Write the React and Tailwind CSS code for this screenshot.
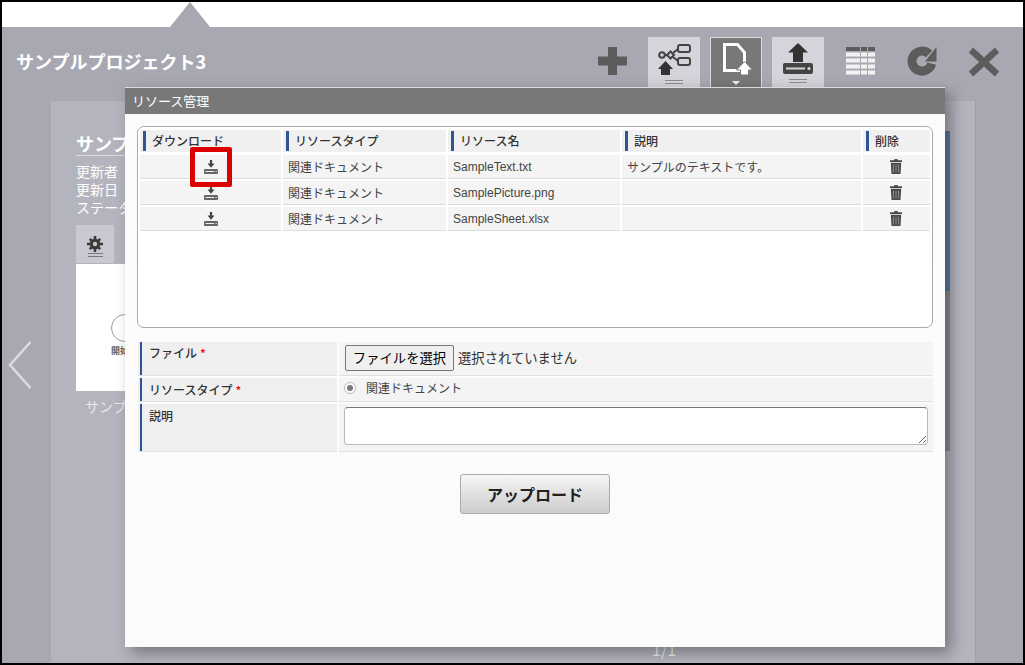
function DownloadIcon() {
  return (
    <svg viewBox="0 0 14 14" className="w-[14px] h-[14px]">
      <path d="M5.900 0h2.200v3.600h2.400L7 7.800 3.500 3.600h2.400z" fill="#444" />
      <path d="M1 9h12a1 1 0 0 1 1 1v3a1 1 0 0 1-1 1H1a1 1 0 0 1-1-1v-3a1 1 0 0 1 1-1z" fill="#666" />
      <path d="M1.500 11h8.500v1H1.500zM11.500 11h1.200v1h-1.200z" fill="#f0f0f0" />
    </svg>
  );
}

function TrashIcon() {
  return (
    <svg viewBox="0 0 12 15" className="w-[12px] h-[15px]">
      <path d="M4 1.200 4.700 0h2.600l.7 1.200H12V3H0V1.200z" fill="#4a4a4a" />
      <path d="M.8 3.800h10.400l-.7 11.200h-9z" fill="#4a4a4a" />
      <path d="M3 5.500h1v8H3zM5.500 5.500h1v8h-1zM8 5.500h1v8H8z" fill="#8c8c8c" />
    </svg>
  );
}

function GearIcon() {
  return (
    <svg viewBox="0 0 16 16" className="w-4 h-4">
      <g fill="#3a3a3a">
        <circle cx="8" cy="8" r="5.200" />
        <path d="M6.700 0h2.600v16H6.700zM0 6.700h16v2.600H0z" />
        <path d="M1.900 3.700 3.700 1.900l10.400 10.400-1.800 1.800zM12.300 1.900l1.800 1.800L3.700 14.100l-1.800-1.800z" />
      </g>
      <circle cx="8" cy="8" r="2.200" fill="#c8c8d0" />
    </svg>
  );
}

function TabLines() {
  return (
    <div className="flex flex-col gap-[2px] mt-[5px]">
      <div className="w-[18px] h-px bg-[#8c8c8c]" />
      <div className="w-[18px] h-px bg-[#8c8c8c]" />
    </div>
  );
}

function Toolbar() {
  return (
    <div className="flex items-start pt-[10px]">
      <svg viewBox="0 0 29 28" className="w-[29px] h-[28px] mt-[10px] mr-[21px]">
        <path d="M10 0h9v9.500h10v9H19V28h-9v-9.500H0v-9h10z" fill="#5c5c5c" />
      </svg>

      <div className="w-[52px] h-[50px] bg-[#d4d4da] flex flex-col items-center pt-[7px] mr-[10px]">
        <svg viewBox="0 0 33 31" className="w-[33px] h-[31px]">
          <g fill="none" stroke="#444" strokeWidth="2">
            <circle cx="4" cy="11" r="2.800" />
            <path d="M12.500 7.500 16 11l-3.500 3.500L9 11z" />
            <path d="M7 11h2M15 9l5-4M15 13l5 4" />
            <rect x="20" y="1" width="12" height="7" rx="2" />
            <rect x="20" y="14" width="12" height="7" rx="2" />
          </g>
          <path d="M7.500 17l7.500 8h-3v6H3v-6H0z" fill="#333" />
        </svg>
        <TabLines />
      </div>

      <div className="w-[52px] h-[51px] bg-[#787878] border border-[#dcdcdc] border-b-0 flex flex-col pt-[5px] mr-[10px]">
        <svg viewBox="0 0 30 32" className="w-[30px] h-[32px] ml-[12px]">
          <path d="M1.500 1.500h13l7 8v18h-20z" fill="none" stroke="#fff" strokeWidth="3" />
          <path d="M21.500 18.500l8 8.500h-4v5h-8v-5h-4z" fill="#fff" stroke="#787878" strokeWidth="1" />
        </svg>
        <div className="self-center mt-[6px] w-0 h-0 border-l-[4px] border-r-[4px] border-t-[4px] border-l-transparent border-r-transparent border-t-[#eee]" />
      </div>

      <div className="w-[52px] h-[50px] bg-[#d4d4da] flex flex-col items-center pt-[6px] mr-[22px]">
        <svg viewBox="0 0 30 31" className="w-[30px] h-[31px]">
          <path d="M15 0l10 9.500h-5V19H10V9.500H5z" fill="#333" />
          <path d="M2 20h26a2 2 0 0 1 2 2v7a2 2 0 0 1-2 2H2a2 2 0 0 1-2-2v-7a2 2 0 0 1 2-2z" fill="#444" />
          <path d="M3 24.500h19v2H3z" fill="#d4d4da" />
          <circle cx="26" cy="25.500" r="1.600" fill="#d4d4da" />
        </svg>
        <TabLines />
      </div>

      <svg viewBox="0 0 29 28" className="w-[29px] h-[28px] mt-[10px] mr-[32px]">
        <path d="M0 0h14v4H0zM15 0h6v4h-6zM22 0h7v4h-7z" fill="#5c5c5c" />
        <path d="M0 5.500h14v4H0zM15 5.500h6v4h-6zM22 5.500h7v4h-7zM0 11.500h14v4H0zM15 11.500h6v4h-6zM22 11.500h7v4h-7zM0 17.500h14v4H0zM15 17.500h6v4h-6zM22 17.500h7v4h-7zM0 23.500h14v4H0zM15 23.500h6v4h-6zM22 23.500h7v4h-7z" fill="#f2f2f2" />
      </svg>

      <svg viewBox="0 0 31 30" className="w-[31px] h-[30px] mt-[9px] mr-[30px]">
        <path d="M24.700 17.600A10 10 0 1 1 22 7.900" fill="none" stroke="#5c5c5c" strokeWidth="9" />
        <path d="M29.500 1v14.500H18z" fill="#5c5c5c" />
      </svg>

      <svg viewBox="0 0 32 30" className="w-[32px] h-[30px] mt-[10px]">
        <path d="M3 3l26 24M29 3 3 27" fill="none" stroke="#5c5c5c" strokeWidth="6.500" />
      </svg>
    </div>
  );
}

function Background() {
  return (
    <div className="flex h-[562px] text-white">
      <div className="w-[49px] bg-[#a8a8b2] flex flex-col pl-[6px] pt-[240px] shrink-0">
        <svg viewBox="0 0 24 48" className="w-[24px] h-[48px]">
          <path d="M22.500 1 2 24l20.500 23" fill="none" stroke="#dcdce0" strokeWidth="2.500" />
        </svg>
      </div>

      <div className="w-[924px] bg-[#b4b4be] pl-[25px] pt-[30px] shrink-0 flex flex-col">
        <div className="w-[874px] h-[320px] flex">
          <div className="w-[869px]">
            <div className="text-[18px] font-bold leading-[24px] border-b border-[#dcdce0] w-[200px]">サンプル</div>
            <div className="text-[14px] leading-[18px] mt-[6px]">
              <div>更新者</div>
              <div>更新日</div>
              <div>ステータス</div>
            </div>
            <div className="w-[38px] h-[38px] bg-[#c8c8d0] mt-[9px] flex flex-col items-center pt-[11px]">
              <GearIcon />
              <div className="flex flex-col gap-[2px] mt-px">
                <div className="w-[15px] h-px bg-[#777]" />
                <div className="w-[15px] h-px bg-[#777]" />
              </div>
            </div>
            <div className="w-[869px] h-[127px] bg-white mt-px flex pl-[35px] pt-[50px]">
              <div className="w-[50px]">
                <div className="w-[28px] h-[28px] rounded-full border border-[#999]" />
                <div className="text-[9px] text-[#666] font-bold mt-[2px]">開始</div>
              </div>
              <div className="w-[28px] h-[28px] ml-[135px] rounded-full border border-[#999]" />
            </div>
            <div className="text-[14px] mt-[5px] ml-[9px] text-[#e6e6ea]">サンプル</div>
          </div>
          <div className="w-[5px] flex flex-col">
            <div className="h-[160px] bg-[#5a7da6]" />
            <div className="h-[160px] bg-[#8f8f99]" />
          </div>
        </div>
        <div className="mt-[189px] pl-[576px] text-[16px] leading-[18px] text-[#eeeef0]">1/1</div>
      </div>

      <div className="w-[48px] bg-[#a8a8b2] border-l border-[#9e9ea8] shrink-0" />
    </div>
  );
}

function HeadCell({ children }) {
  return (
    <div className="h-[22px] bg-[#f0f0f0] flex items-center pl-[3px]">
      <div className="w-[3px] h-[20px] bg-[#2f5597]" />
      <div className="pl-[6px] pb-px text-[12px] font-medium text-[#333]">{children}</div>
    </div>
  );
}

function Row({ type, name, note, first }) {
  return (
    <div className={`grid grid-cols-[141px_163px_172px_239px_67px] gap-x-[2px] text-[12px] text-[#444] ${first ? "mt-[3px]" : "mt-[2px]"}`}>
      <div className="h-[24px] bg-[#f4f4f4] border-b border-[#ddd] flex items-center justify-center">
        <DownloadIcon />
      </div>
      <div className="h-[24px] bg-[#f4f4f4] border-b border-[#ddd] flex items-center pl-[5px]">{type}</div>
      <div className="h-[24px] bg-[#f4f4f4] border-b border-[#ddd] flex items-center pl-[5px] font-['Liberation_Sans',sans-serif]">{name}</div>
      <div className="h-[24px] bg-[#f4f4f4] border-b border-[#ddd] flex items-center pl-[5px]">{note}</div>
      <div className="h-[24px] bg-[#f4f4f4] border-b border-[#ddd] flex items-center justify-center pr-[2px]">
        <TrashIcon />
      </div>
    </div>
  );
}

function FormRow({ label, required, height, labelPad, children }) {
  return (
    <div className={`flex gap-[2px] ${height}`}>
      <div className="w-[199px] bg-[#efefef] border-b border-[#e0e0e0] flex items-start pl-[2px]">
        <div className="w-[2px] h-full bg-[#2f5597]" />
        <div className={`pl-[7px] ${labelPad} text-[12px] font-medium text-[#333] leading-[18px]`}>
          {label}
          {required && <span className="text-[#e00] ml-[3px]">*</span>}
        </div>
      </div>
      <div className="w-[594px] bg-[#f4f4f4] border-b border-[#e0e0e0]">{children}</div>
    </div>
  );
}

function Modal() {
  return (
    <div className="absolute left-[123px] top-[85px] w-[820px] h-[560px] bg-[#fcfcfc]/98 shadow-[6px_6px_14px_rgba(0,0,0,0.35)]">
      <div className="h-[27px] bg-[#787878] border-t border-[#dcdcdc] text-white text-[13px] leading-[25px] pl-[7px]">
        リソース管理
      </div>

      <div className="ml-[12px] mt-[12px] w-[796px] h-[202px] border border-[#aaa] bg-white rounded-[7px] pt-[3px] pl-[2px]">
        <div className="grid grid-cols-[141px_163px_172px_239px_67px] gap-x-[2px]">
          <HeadCell>ダウンロード</HeadCell>
          <HeadCell>リソースタイプ</HeadCell>
          <HeadCell>リソース名</HeadCell>
          <HeadCell>説明</HeadCell>
          <HeadCell>削除</HeadCell>
        </div>
        <Row first type="関連ドキュメント" name="SampleText.txt" note="サンプルのテキストです。" />
        <Row type="関連ドキュメント" name="SamplePicture.png" />
        <Row type="関連ドキュメント" name="SampleSheet.xlsx" />
      </div>

      <div className="ml-[13px] mt-[14px] flex flex-col gap-[2px]">
        <FormRow label="ファイル" required height="h-[34px]" labelPad="pt-[2px]">
          <div className="flex items-center h-full pl-[6px] pb-[1px] text-[13.330px] text-[#333]">
            <button className="h-[26px] w-[109px] bg-[#efefef] border border-[#767676] rounded-[2px] text-black text-[13.330px]">
              ファイルを選択
            </button>
            <span className="ml-[4px]">選択されていません</span>
          </div>
        </FormRow>
        <FormRow label="リソースタイプ" required height="h-[24px]" labelPad="pt-[3px]">
          <div className="flex items-center h-full pl-[5px] pb-[4px] text-[12px] text-[#444]">
            <div className="w-[12px] h-[12px] rounded-full border border-[#bbb] bg-white flex items-center justify-center">
              <div className="w-[6px] h-[6px] rounded-full bg-[#777]" />
            </div>
            <span className="ml-[10px]">関連ドキュメント</span>
          </div>
        </FormRow>
        <FormRow label="説明" height="h-[48px]" labelPad="pt-[3px]">
          <div className="pl-[5px] pt-[3px]">
            <textarea className="block w-[584px] h-[38px] bg-white border border-[#bbb] border-t-[#777] rounded-[4px]" />
          </div>
        </FormRow>
      </div>

      <div className="flex justify-center mt-[22px]">
        <button className="w-[150px] h-[40px] rounded-[3px] border border-[#aaa] bg-gradient-to-b from-[#f5f5f5] to-[#cdcdcd] text-[16px] font-bold text-[#222]">
          アップロード
        </button>
      </div>
    </div>
  );
}

export default function App() {
  return (
    <div className="relative w-[1025px] h-[665px] border-2 border-black overflow-hidden bg-white font-['Noto_Sans_CJK_JP','Liberation_Sans',sans-serif]">
      <div className="h-[25px] bg-white flex items-end pl-[168px]">
        <svg viewBox="0 0 40 25" className="w-[40px] h-[25px]">
          <path d="M20 0l20 25H0z" fill="#a8a8b2" />
        </svg>
      </div>

      <div className="h-[74px] bg-[#a8a8b2] flex justify-between pl-[14px] pr-[23px]">
        <div className="text-[18px] font-bold text-white leading-[68px]">サンプルプロジェクト3</div>
        <Toolbar />
      </div>

      <Background />
      <Modal />

      <div className="absolute left-[188px] top-[145px] w-[42px] h-[40px] border-[5px] border-[#dc0000] rounded-[2px]" />
    </div>
  );
}
